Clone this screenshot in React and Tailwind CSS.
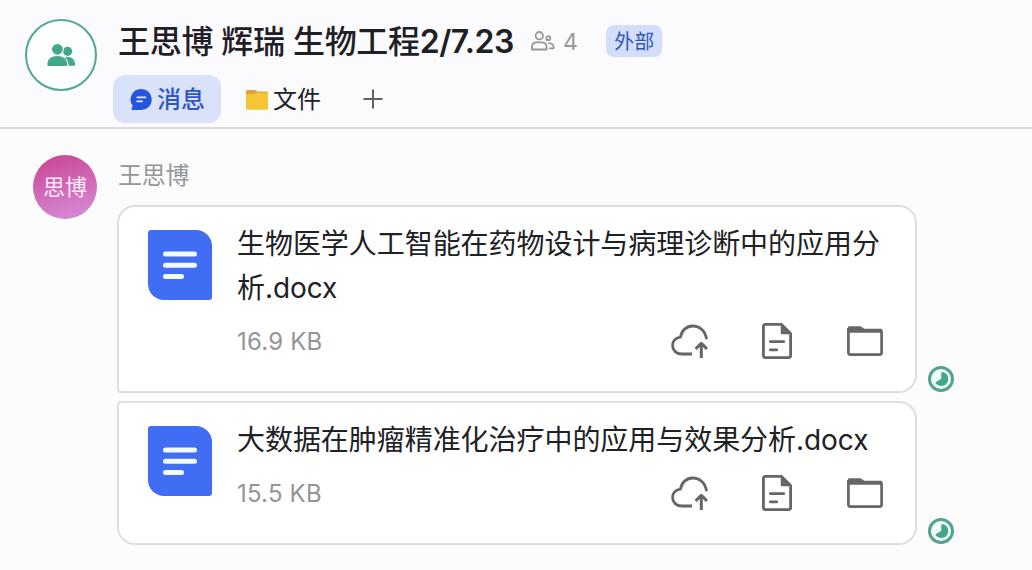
import React from 'react';

const files = [
    {
        name: '生物医学人工智能在药物设计与病理诊断中的应用分析.docx',
        size: '16.9 KB',
        corners: 'rounded-t-[18px] rounded-br-[18px] rounded-bl-[4px]',
    },
    {
        name: '大数据在肿瘤精准化治疗中的应用与效果分析.docx',
        size: '15.5 KB',
        corners: 'rounded-b-[18px] rounded-tr-[18px] rounded-tl-[4px]',
    },
];

function GroupIcon() {
    return (
        <svg className="ml-px" width="30" height="24" viewBox="0 0 30 24" fill="#43a78c">
            <circle cx="20.6" cy="8.3" r="4.6" />
            <path d="M18 14.4c5.500-1.800 10 1.200 10.200 7.400a1 1 0 0 1-1 1H20Z" />
            <circle cx="10.400" cy="6.300" r="6.400" fill="#fff" />
            <path d="M-.8 24v-2.600C-.8 9.800 21.400 9.800 21.400 21.400V24Z" fill="#fff" />
            <circle cx="10.400" cy="6.300" r="5.400" />
            <path d="M.4 21.400c0-5.600 4.300-8.400 9.900-8.400s9.900 2.800 9.900 8.400v.7a1 1 0 0 1-1 1H1.400a1 1 0 0 1-1-1Z" />
        </svg>
    );
}

function MembersIcon() {
    return (
        <svg width="24" height="20" viewBox="0 0 24 20" fill="none" stroke="#96989c" strokeWidth="1.800" strokeLinejoin="round" strokeLinecap="round">
            <circle cx="8.300" cy="4.700" r="3.700" />
            <path d="M1 18.500v-2.200c0-3 2-4.900 5-4.900h4.600c3 0 5 1.900 5 4.900v2.200Z" />
            <circle cx="17.300" cy="7.200" r="2" />
            <path d="M17.800 12.200c3 0 4.900 1.700 4.900 5.100h-3.900" />
        </svg>
    );
}

function ChatIcon() {
    return (
        <svg className="-mt-px" width="22" height="21" viewBox="0 0 22 21">
            <path d="M11.300 0a10.500 10.500 0 1 1 0 21H2.600c-1 0-1.400-1-.8-1.700l.9-2.500A10.500 10.500 0 0 1 11.300 0Z" fill="#2355dd" />
            <path d="M7.300 8.400h8M7.300 12.300h4.800" stroke="#e8f0ff" strokeWidth="1.800" strokeLinecap="round" />
        </svg>
    );
}

function YellowFolder() {
    return (
        <svg className="-mt-px" width="22" height="20" viewBox="0 0 22 20">
            <path d="M0 1.500C0 .6.600 0 1.500 0h7.200l3 1.500h8.800c.9 0 1.500.6 1.500 1.500V10H0Z" fill="#e5a03a" />
            <path d="M0 4.200h7.600l3-1.500H22v15.500c0 .9-.6 1.500-1.500 1.500h-19c-.9 0-1.500-.6-1.500-1.500Z" fill="#f4c534" />
        </svg>
    );
}

function DocBadge() {
    return (
        <svg className="mt-2 shrink-0" width="64" height="70" viewBox="0 0 64 70">
            <path d="M3 0h45a16 16 0 0 1 16 16v51a3 3 0 0 1-3 3H16A16 16 0 0 1 0 54V3a3 3 0 0 1 3-3Z" fill="#416df4" />
            <path d="M17.500 24h29M17.500 35.300h29M17.500 46.500h16" stroke="#f2fbff" strokeWidth="5" strokeLinecap="round" />
        </svg>
    );
}

function CloudUpload() {
    return (
        <svg width="38" height="36" viewBox="0 0 38 36" fill="none" stroke="#656667" strokeWidth="2.800" strokeLinejoin="round">
            <path d="M21 31H10.300C5.200 31 1.600 27 1.600 22.400c0-4.400 3.200-7.700 7.900-8.300C10.400 7.600 15.500 3 21.800 3c7 0 12.500 5 13.800 13.300" />
            <path d="M30.300 35V21M24.700 25.900l5.600-5.600 5.600 5.600" strokeWidth="3" />
        </svg>
    );
}

function FileText() {
    return (
        <svg width="30" height="36" viewBox="0 0 30 36" fill="none" stroke="#656667" strokeWidth="2.800" strokeLinejoin="round" strokeLinecap="round">
            <path d="M19.500 1.400H3.400a2 2 0 0 0-2 2v29.200a2 2 0 0 0 2 2h23.200a2 2 0 0 0 2-2V10.500Z" />
            <path d="M19.500 1.800v8.700h8.700Z" fill="#656667" strokeWidth="1.500" />
            <path d="M8.300 18.600h13.500M8.300 26.800h6.500" />
        </svg>
    );
}

function FolderOutline() {
    return (
        <svg width="36" height="30" viewBox="0 0 36 30">
            <path d="M2 .2h11.500l4 2.600H34a1.500 1.500 0 0 1 1.500 1.500V6.500H1V1.500A1.300 1.300 0 0 1 2 .2Z" fill="#656667" />
            <path d="M1.400 5.200h31.200a2 2 0 0 1 2 2v19.400a2 2 0 0 1-2 2H3.400a2 2 0 0 1-2-2V2" fill="none" stroke="#656667" strokeWidth="2.700" />
        </svg>
    );
}

function ReadStatus() {
    return (
        <svg className="mb-px shrink-0" width="26" height="26" viewBox="0 0 26 26">
            <circle cx="13" cy="13" r="11.500" fill="#f0fffb" stroke="#56a18d" strokeWidth="3" />
            <path d="M13.300 12.700V6a7 7 0 1 1-6 10.500Z" fill="#43a68c" />
        </svg>
    );
}

function FileCard({ file }) {
    return (
        <div className="flex items-end gap-[11px]">
            <div className={`flex w-[800px] gap-[25px] border-2 border-[#dfdfe0] bg-white pt-[15px] pr-8 pb-[29px] pl-[29px] ${file.corners}`}>
                <DocBadge />
                <div className="min-w-0 flex-1">
                    <p className="-mr-4 break-all text-[28px] leading-[44px] tracking-[-0.05px] text-[#202124]">{file.name}</p>
                    <div className="mt-3 flex h-10 items-center justify-between">
                        <span className="text-[24px] leading-10 tracking-[0.2px] text-[#949597]">{file.size}</span>
                        <div className="-mt-0.5 flex items-center">
                            <CloudUpload />
                            <span className="ml-[53px]"><FileText /></span>
                            <span className="ml-[55px]"><FolderOutline /></span>
                        </div>
                    </div>
                </div>
            </div>
            <ReadStatus />
        </div>
    );
}

export default function App() {
    return (
        <div className="h-[570px] w-[1032px] overflow-hidden bg-[#fcfcfc] font-['Inter','Noto_Sans_CJK_SC',sans-serif]">
            <header className="flex h-[129px] gap-4 border-b-2 border-[#d9dbdd] bg-[#fbfbfe] pl-[25px]">
                <div className="mt-[19px] flex h-[72px] w-[72px] items-center justify-center rounded-full border-2 border-[#51a78f] bg-[#fcfffe]">
                    <GroupIcon />
                </div>
                <div className="pt-5">
                    <div className="flex h-11 items-center pl-[5px]">
                        <h1 className="w-[396px] text-[32px] leading-[44px] font-medium tracking-[-0.3px] whitespace-nowrap text-[#1f2026]">
                            王思博 辉瑞 生物工程<span className="font-semibold tracking-[-0.5px]">2/7.23</span>
                        </h1>
                        <span className="-mt-0.5 ml-[17px]"><MembersIcon /></span>
                        <span className="ml-2 text-[23px] text-[#96989c]">4</span>
                        <span className="-mt-0.5 ml-7 flex h-8 w-14 items-center justify-center rounded-lg bg-[#d3defa] pt-px pl-px text-[20px] text-[#3156b4]">外部</span>
                    </div>
                    <nav className="mt-[11px] flex h-12 items-center">
                        <button className="flex h-12 w-[108px] items-center gap-[5px] rounded-xl bg-[#dae2fa] pt-0.5 pl-[17px] text-[24px] font-medium text-[#2e57c4]">
                            <ChatIcon />
                            消息
                        </button>
                        <button className="ml-[25px] flex items-center gap-[5px] pt-0.5 text-[24px] text-[#202126]">
                            <YellowFolder />
                            文件
                        </button>
                        <button className="ml-[42px]">
                            <svg width="20" height="20" viewBox="0 0 20 20" stroke="#5f6268" strokeWidth="2">
                                <path d="M10 .5v19M.5 10h19" />
                            </svg>
                        </button>
                    </nav>
                </div>
            </header>

            <main className="flex gap-5 pt-[26px] pl-[33px]">
                <div className="flex h-16 w-16 items-center justify-center rounded-full bg-linear-[165deg] from-[#c94391] to-[#d78fdb] text-[22px] text-[#fdeafa]">
                    思博
                </div>
                <div>
                    <div className="pt-1 pl-px text-[24px] leading-[34px] tracking-[-0.2px] text-[#949597]">王思博</div>
                    <div className="mt-3 flex flex-col gap-2">
                        {files.map((file) => (
                            <FileCard key={file.name} file={file} />
                        ))}
                    </div>
                </div>
            </main>
        </div>
    );
}
